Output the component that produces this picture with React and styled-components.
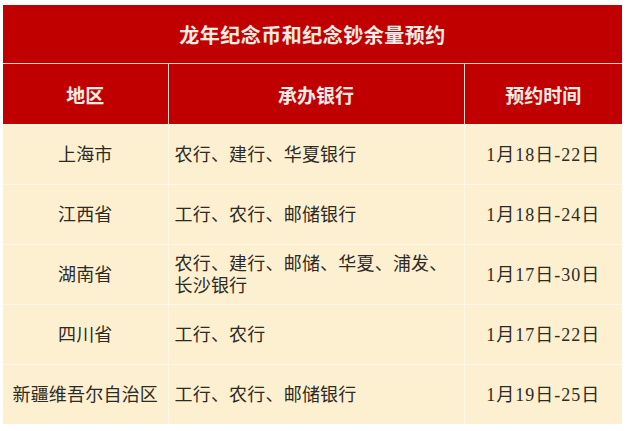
import React from 'react'
import styled, { createGlobalStyle } from 'styled-components'

const GlobalStyle = createGlobalStyle`
  html, body {
    margin: 0;
    padding: 0;
    background: #ffffff;
  }
  body {
    font-family: "Liberation Serif", "Noto Sans CJK SC", serif;
  }
`

const Page = styled.div`
  padding: 5px 0 0 3px;
  width: 628px;
  height: 431px;
  box-sizing: border-box;
`

const Table = styled.table`
  width: 619px;
  border-collapse: collapse;
  table-layout: fixed;
`

const TitleCell = styled.th`
  height: 58px;
  padding: 0;
  background: #c00000;
  color: #f8ece4;
  font-size: 20px;
  font-weight: 700;
  letter-spacing: 0.5px;
  text-align: center;
  border-bottom: 1px solid #f3d9c9;
`

const HeadCell = styled.th`
  height: 60px;
  padding: 0;
  background: #c00000;
  color: #f8ece4;
  font-size: 19px;
  font-weight: 700;
  text-align: center;
  border-left: 1px solid #f3d9c9;
  &:first-child {
    border-left: none;
  }
`

const Cell = styled.td`
  height: 59px;
  padding: 0 ${(p) => (p.$left ? '6px' : '0')};
  background: #fdf0d1;
  color: #2e2a24;
  font-size: 18px;
  line-height: 22px;
  letter-spacing: ${(p) => (p.$date ? '1px' : '0.2px')};
  text-align: ${(p) => (p.$left ? 'left' : 'center')};
  border-top: 1px solid #fff8ea;
  border-left: 1px solid #fff8ea;
  &:first-child {
    border-left: none;
  }
`

const rows = [
  { area: '上海市', banks: ['农行、建行、华夏银行'], date: '1月18日-22日' },
  { area: '江西省', banks: ['工行、农行、邮储银行'], date: '1月18日-24日' },
  { area: '湖南省', banks: ['农行、建行、邮储、华夏、浦发、', '长沙银行'], date: '1月17日-30日' },
  { area: '四川省', banks: ['工行、农行'], date: '1月17日-22日' },
  { area: '新疆维吾尔自治区', banks: ['工行、农行、邮储银行'], date: '1月19日-25日' },
]

export default function App() {
  return (
    <Page>
      <GlobalStyle />
      <Table>
        <colgroup>
          <col style={{ width: 165 }} />
          <col style={{ width: 296 }} />
          <col style={{ width: 158 }} />
        </colgroup>
        <thead>
          <tr>
            <TitleCell colSpan={3}>龙年纪念币和纪念钞余量预约</TitleCell>
          </tr>
          <tr>
            <HeadCell>地区</HeadCell>
            <HeadCell>承办银行</HeadCell>
            <HeadCell>预约时间</HeadCell>
          </tr>
        </thead>
        <tbody>
          {rows.map((r) => (
            <tr key={r.area}>
              <Cell>{r.area}</Cell>
              <Cell $left>
                {r.banks.map((line, i) => (
                  <div key={i}>{line}</div>
                ))}
              </Cell>
              <Cell $date>{r.date}</Cell>
            </tr>
          ))}
        </tbody>
      </Table>
    </Page>
  )
}
